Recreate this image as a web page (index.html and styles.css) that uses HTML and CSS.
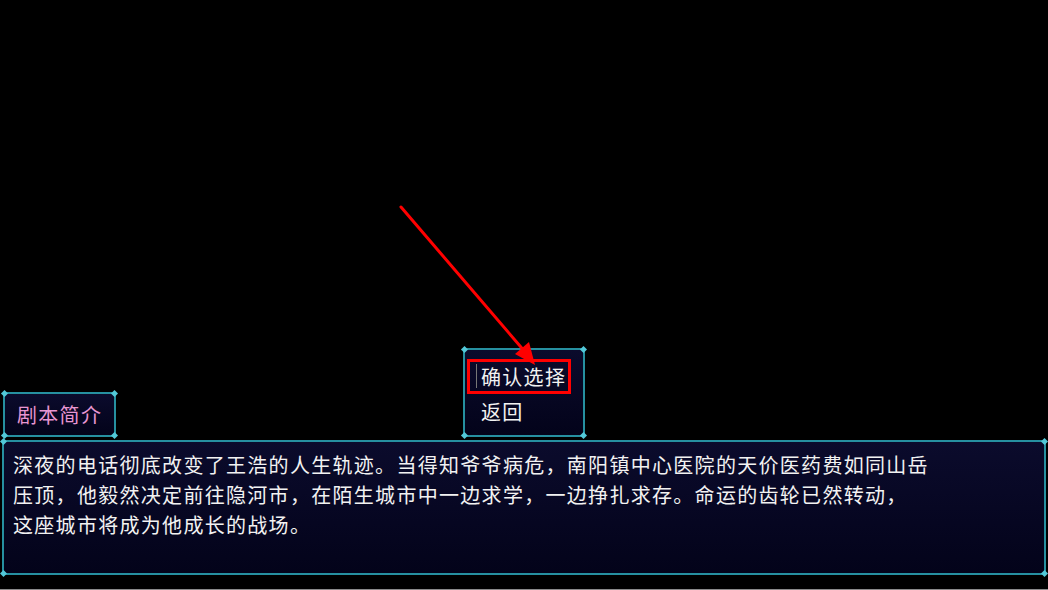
FILE: index.html
```html
<!DOCTYPE html>
<html lang="zh-CN">
<head>
<meta charset="UTF-8">
<meta name="viewport" content="width=device-width, initial-scale=1.0">
<title>剧本选择</title>
<link rel="stylesheet" href="styles.css">
</head>
<body>

<div class="screen">
  <div class="stage"></div>

  <div class="bar">
    <div class="win tab">
      <i class="dot tl"></i><i class="dot tr"></i><i class="dot bl"></i><i class="dot br"></i>
      <span class="tab-title">剧本简介</span>
    </div>

    <div class="win menu">
      <i class="dot tl"></i><i class="dot tr"></i><i class="dot bl"></i><i class="dot br"></i>
      <div class="menu-item active">确认选择</div>
      <div class="menu-item">返回</div>
    </div>
  </div>

  <div class="win desc">
    <i class="dot tl"></i><i class="dot tr"></i><i class="dot bl"></i><i class="dot br"></i>
    <p>深夜的电话彻底改变了王浩的人生轨迹。当得知爷爷病危，南阳镇中心医院的天价医药费如同山岳<br>压顶，他毅然决定前往隐河市，在陌生城市中一边求学，一边挣扎求存。命运的齿轮已然转动，<br>这座城市将成为他成长的战场。</p>
  </div>

  <!-- pointer drawn over the menu -->
  <svg class="pointer" width="1048" height="590" viewBox="0 0 1048 590">
    <line x1="401" y1="207" x2="526" y2="353" stroke="#ff0000" stroke-width="3" stroke-linecap="round"/>
    <polygon points="535,365 515,354 529,342" fill="#ff0000"/>
  </svg>
</div>

</body>
</html>
```

FILE: styles.css
```css
body {
  margin: 0;
  background: #000;
  font-family: "Noto Sans CJK SC", "Noto Sans", sans-serif;
  color: #f2f2f2;
}
.screen {
  position: relative;
  width: 1048px;
  height: 590px;
  display: flex;
  flex-direction: column;
  padding-bottom: 14px;
  box-sizing: border-box;
  border-bottom: 1px solid #8a8a8a;
}
.stage {
  flex: 1;
}

/* window frame */
.win {
  position: relative;
  box-sizing: border-box;
  border: 2px solid #2690a0;
  border-radius: 4px;
  background: linear-gradient(#0b0b2c, #03031a);
}
.dot {
  position: absolute;
  width: 5px;
  height: 5px;
  background: #52c8d8;
  transform: rotate(45deg);
}
.dot.tl { top: -3px; left: -3px; }
.dot.tr { top: -3px; right: -3px; }
.dot.bl { bottom: -3px; left: -3px; }
.dot.br { bottom: -3px; right: -3px; }

.bar {
  display: grid;
  grid-template-columns: 1fr auto 1fr;
  align-items: end;
}

.tab {
  justify-self: start;
  width: 113px;
  height: 45px;
  margin-left: 3px;
  padding-left: 12px;
  display: flex;
  align-items: center;
}
.tab-title {
  color: #e896d2;
  font-size: 20px;
  letter-spacing: 1.3px;
}

.menu {
  width: 122px;
  height: 89px;
  padding: 12px 15px 6px 5px;
}
.menu-item {
  height: 34px;
  line-height: 34px;
  padding-left: 11px;
  font-size: 20px;
  letter-spacing: 1.3px;
}
.menu-item.active {
  height: 29px;
  line-height: 29px;
  margin-bottom: 4px;
  outline: 3px solid #f00;
  background: linear-gradient(90deg, transparent 6px, #777 6px, #777 7px, transparent 7px) no-repeat;
  background-size: 100% 24px;
  background-position: 0 2px;
}

.desc {
  margin: 3px 2px 0;
  height: 135px;
  padding: 8px 9px;
}
.desc p {
  margin: 0;
  font-size: 20px;
  line-height: 30px;
  letter-spacing: 1.3px;
}

.pointer {
  position: absolute;
  top: 0;
  left: 0;
}
```
